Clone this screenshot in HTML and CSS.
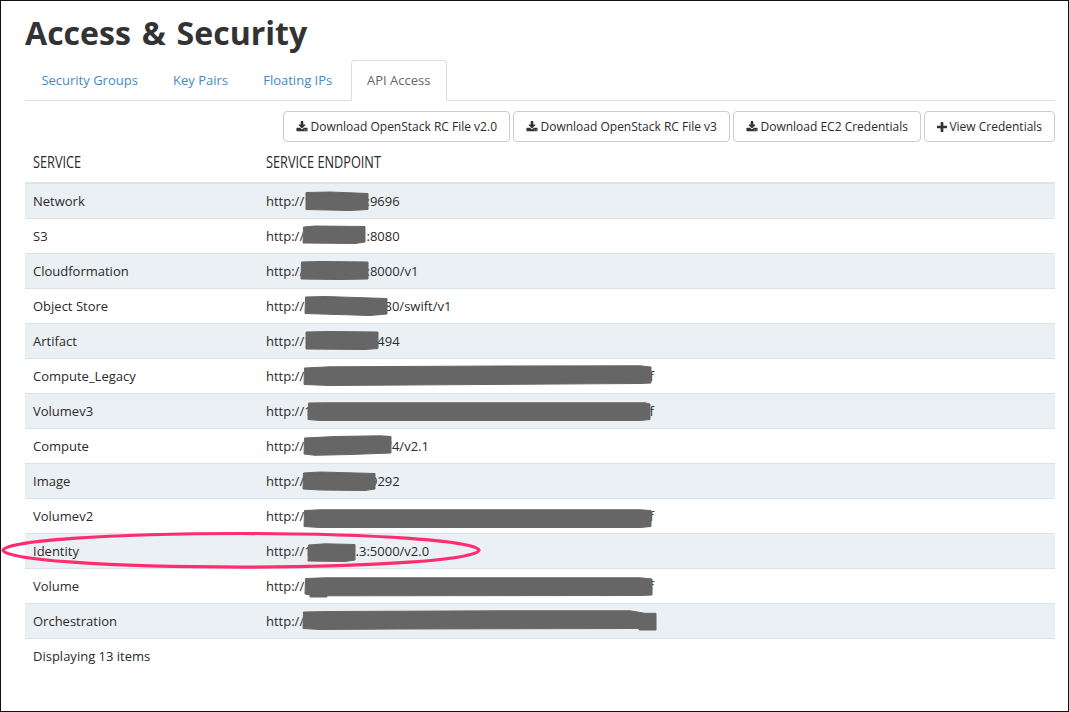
FILE: index.html
```html
<!DOCTYPE html>
<html lang="en">
<head>
<meta charset="utf-8">
<title>Access &amp; Security</title>
<link rel="stylesheet" href="styles.css">
</head>
<body>
<svg class="sprite" aria-hidden="true">
  <symbol id="download" viewBox="0 0 1792 1792"><path d="M1344 1344q0-26-19-45t-45-19-45 19-19 45 19 45 45 19 45-19 19-45zm256 0q0-26-19-45t-45-19-45 19-19 45 19 45 45 19 45-19 19-45zm128-224v320q0 40-28 68t-68 28h-1472q-40 0-68-28t-28-68v-320q0-40 28-68t68-28h465l135 136q58 56 136 56t136-56l136-136h464q40 0 68 28t28 68zm-325-569q17 41-14 70l-448 448q-18 19-45 19t-45-19l-448-448q-31-29-14-70 17-39 59-39h256v-448q0-26 19-45t45-19h256q26 0 45 19t19 45v448h256q42 0 59 39z"/></symbol>
  <symbol id="plus" viewBox="192 0 1408 1664"><path d="M1600 736v192q0 40-28 68t-68 28h-416v416q0 40-28 68t-68 28h-192q-40 0-68-28t-28-68v-416h-416q-40 0-68-28t-28-68v-192q0-40 28-68t68-28h416v-416q0-40 28-68t68-28h192q40 0 68 28t28 68v416h416q40 0 68 28t28 68z"/></symbol>
</svg>
<main class="page">
  <h1 class="title"><span class="title-text">Access &amp; Security</span></h1>
  <nav class="tabs">
    <a class="tab">Security Groups</a>
    <a class="tab">Key Pairs</a>
    <a class="tab">Floating IPs</a>
    <a class="tab active">API Access</a>
  </nav>
  <div class="actions">
    <button class="btn rc2"><svg class="icon"><use href="#download"/></svg><span>Download OpenStack RC File v2.0</span></button>
    <button class="btn rc3"><svg class="icon"><use href="#download"/></svg><span>Download OpenStack RC File v3</span></button>
    <button class="btn ec2"><svg class="icon"><use href="#download"/></svg><span>Download EC2 Credentials</span></button>
    <button class="btn view"><svg class="icon plus"><use href="#plus"/></svg><span>View Credentials</span></button>
  </div>
  <div class="table">
    <div class="row head"><span><b class="caption">Service</b></span><span><b class="caption">Service Endpoint</b></span></div>
    <div class="row"><span>Network</span><span class="url"><i class="lead port">http://1</i>:9696</span></div>
    <div class="row"><span>S3</span><span class="url"><i class="lead port">http://</i>:8080</span></div>
    <div class="row"><span>Cloudformation</span><span class="url"><i class="lead port">http://</i>:8000/v1</span></div>
    <div class="row"><span>Object Store</span><span class="url"><i class="lead store">http://</i>80/swift/v1</span></div>
    <div class="row"><span>Artifact</span><span class="url"><i class="lead artifact">http://1</i>494</span></div>
    <div class="row"><span>Compute_Legacy</span><span class="url"><i class="lead long">http://</i>f</span></div>
    <div class="row"><span>Volumev3</span><span class="url"><i class="lead long">http://1</i>f</span></div>
    <div class="row"><span>Compute</span><span class="url"><i class="lead compute">http://</i>74/v2.1</span></div>
    <div class="row"><span>Image</span><span class="url"><i class="lead image">http://</i>9292</span></div>
    <div class="row"><span>Volumev2</span><span class="url"><i class="lead long">http://</i>f</span></div>
    <div class="row"><span>Identity</span><span class="url"><i class="lead identity">http://1</i>.3:5000/v2.0</span></div>
    <div class="row"><span>Volume</span><span class="url"><i class="lead long">http://</i>f</span></div>
    <div class="row"><span>Orchestration</span><span class="url">http://</span></div>
    <div class="row foot"><span>Displaying 13 items</span></div>
  </div>
  <svg class="marks" viewBox="0 0 1069 712" aria-hidden="true">
    <g class="redactions">
      <path d="M306 192.500L330 192L368 193.500V209.500L350 210.500L306 209.500Z"/>
      <path d="M303.500 227L315 226L365 226.500V242L355 243.500L303 243Z"/>
      <path d="M301.500 262L320 261.500L368 262V279L340 279.500L301 279Z"/>
      <path d="M305.500 297L325 296.500L387 298.500V314L370 315.500L305 313.500Z"/>
      <path d="M306 332L330 331.500L378 332V348.500L365 349.500L306 349Z"/>
      <path d="M304.500 368L330 366.800L500 366L640 365.800L651 367V383L640 383.500L330 385.500L304 384.500Z"/>
      <path d="M308.500 403L325 402.800L645 402.800L650 404V419.500L640 420.500L320 420.500L308 419.500Z"/>
      <path d="M304.500 438L335 436.500L380 435.800L391 436.500V453L350 454.500L315 455.300L304 454Z"/>
      <path d="M303.500 473L320 472L375 473.500V489L365 490.500L320 490L303 489Z"/>
      <path d="M304.500 510.500L320 509.800L640 509.800L651 510.500V526.500L640 527.500L320 527.500L304 526.500Z"/>
      <path d="M308.500 545L325 543.800L355 544.500V560L345 561.500L308 561Z"/>
      <path d="M305.500 578.500L325 577.800L640 577.800L652 579V595L640 595.500L327 595.800V597H310V595L305 594Z"/>
      <path d="M303.500 612L330 611.500L500 610.800L630 610.800L645 613.300H656V630H639V628.500L400 629L320 629.500L303 628.500Z"/>
    </g>
    <ellipse class="ring" cx="241" cy="550.300" rx="238" ry="16.800"/>
  </svg>
</main>
</body>
</html>
```
FILE: styles.css
```css
* { box-sizing: border-box; }
body { margin: 0; background: #fff; color: #2a2a2a; font: 13px/18.57px "Open Sans", sans-serif; }
.sprite { display: none; }
.page { position: relative; width: 1069px; height: 712px; border: 1px solid #111; padding: 0 13px 0 24px; overflow: hidden; }
.title { margin: 0; height: 59px; padding-top: 12px; color: #333; font: 700 33px/40px "Open Sans", sans-serif; white-space: nowrap; }
.title-text { display: inline-block; word-spacing: 2.5px; transform-origin: 0 50%; transform: scaleX(.972); }
.tabs { display: flex; height: 41px; padding-left: .4px; border-bottom: 1px solid #ddd; gap: 3.2px; }
.tab { height: 41px; padding: 10px 15px; border: 1px solid transparent; color: #428bca; }
.tab.active { padding: 10px 15.4px 10px 14.6px; color: #666; background: #fff; border-color: #ddd #ddd #fff; border-radius: 4px 4px 0 0; }
.actions { display: flex; justify-content: flex-end; gap: 3px; padding-top: 10px; }
.btn { display: flex; align-items: center; justify-content: center; height: 31px; padding: 0; border: 1px solid #ccc; border-radius: 4px; background: #fff; color: #2a2a2a; font: 12px/18px "Open Sans", sans-serif; white-space: nowrap; gap: 2.5px; }
.rc2 { width: 227px; }
.rc3 { width: 217px; }
.ec2 { width: 188px; }
.view { width: 131px; }
.icon { width: 12px; height: 12px; fill: #333; }
.icon.plus { width: 10px; height: 12px; }
.row { display: grid; grid-template-columns: 233px 1fr; height: 35px; padding-top: 8px; border-top: 1px solid #d9e3eb; }
.row > span { padding-left: 8px; white-space: nowrap; }
.row:nth-child(even) { background: #ebf0f4; }
.head { height: 42px; padding-top: 10px; border-top: 0; border-bottom: 2px solid #d9e3eb; }
.head + .row { height: 34px; border-top: 0; }
.row.foot { background: #fff; }
.caption { display: inline-block; font: 500 17px/20px "Open Sans", sans-serif; text-transform: uppercase; transform: scaleX(.748); transform-origin: 0 50%; }
.lead { display: inline-block; font-style: normal; }
.port { width: 100.500px; }
.store { width: 118.500px; }
.artifact { width: 111.300px; }
.long { width: 383.500px; }
.compute { width: 118.500px; }
.image { width: 104px; }
.identity { width: 89.600px; }
.marks { position: absolute; left: -1px; top: -1px; width: 1069px; height: 712px; }
.redactions { fill: #666; stroke: #666; stroke-width: 1; stroke-linejoin: round; }
.ring { fill: none; stroke: #ff2d6f; stroke-width: 3.200; }
```
